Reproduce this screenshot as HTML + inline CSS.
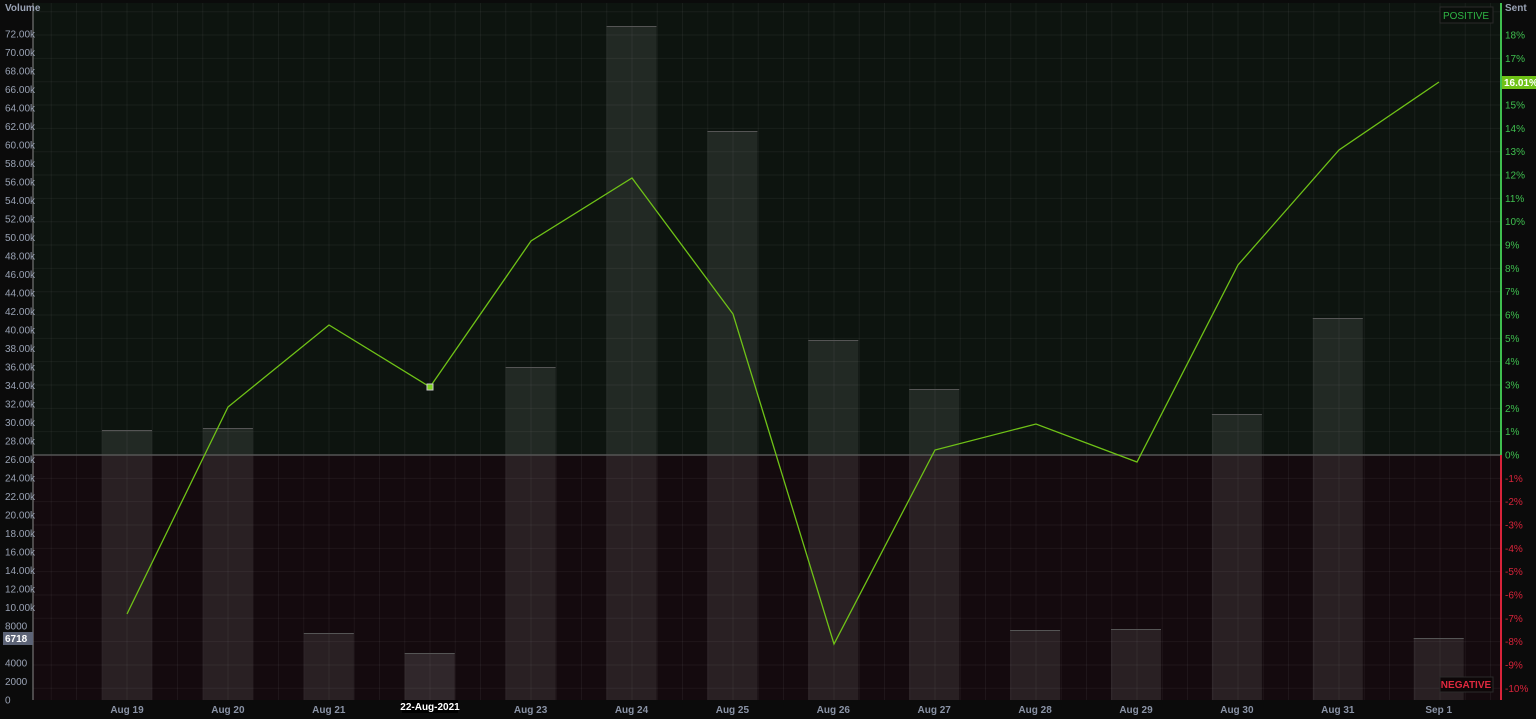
<!DOCTYPE html>
<html><head><meta charset="utf-8"><style>
html,body{margin:0;padding:0;background:#0a0a0a;width:1536px;height:719px;overflow:hidden}
svg{display:block}
text{font-family:"Liberation Sans",sans-serif;font-size:10px}
</style></head><body>
<svg id="s" width="1536" height="719" xmlns="http://www.w3.org/2000/svg"></svg>
<script>
const s=document.getElementById('s');let h='';
const X0=33,X1=1500,Y0=3,Y1=700,Z=455;
h+=`<rect x="0" y="0" width="1536" height="719" fill="#0b0b0b"/>`;
h+=`<rect x="${X0}" y="${Y0}" width="${X1-X0}" height="${Z-Y0}" fill="#0d140f"/>`;
h+=`<rect x="${X0}" y="${Z}" width="${X1-X0}" height="${Y1-Z}" fill="#140a0e"/>`;
for(let x=127-101*1.25;x<X1;x+=101/4){if(x>X0)h+=`<line x1="${x}" y1="${Y0}" x2="${x}" y2="${Y1}" stroke="#ffffff" stroke-opacity="0.05"/>`}
for(let y=Z;y>Y0;y-=23.33)h+=`<line x1="${X0}" y1="${y}" x2="${X1}" y2="${y}" stroke="#ffffff" stroke-opacity="0.05"/>`;
for(let y=Z+23.33;y<Y1;y+=23.33)h+=`<line x1="${X0}" y1="${y}" x2="${X1}" y2="${y}" stroke="#ffffff" stroke-opacity="0.05"/>`;
const tops=[430,428,633,653,367,26,131,340,389,630,629,414,318,638];
const days=['Aug 19','Aug 20','Aug 21','Aug 22','Aug 23','Aug 24','Aug 25','Aug 26','Aug 27','Aug 28','Aug 29','Aug 30','Aug 31','Sep 1'];
tops.forEach((t,i)=>{const cx=127+i*100.9;h+=`<rect x="${cx-25}" y="${t}" width="50" height="${Y1-t}" fill="#ffffff" fill-opacity="${i==3?0.12:0.09}"/><line x1="${cx-25}" y1="${t+0.5}" x2="${cx+25}" y2="${t+0.5}" stroke="#555" />`;
 if(i!=3)h+=`<text x="${cx}" y="713" fill="#8a93a6" text-anchor="middle" font-weight="bold" font-size="9">${days[i]}</text>`});
h+=`<line x1="${X0}" y1="${Z}" x2="${X1}" y2="${Z}" stroke="#555" stroke-width="1.5"/>`;
const pts=[[127,614],[228,407],[329,325],[430,387],[531,241],[632,178],[733,314],[834,644],[935,450],[1036,424],[1137,462],[1238,265],[1339,150],[1439,82]];
h+=`<polyline points="${pts.map(p=>p.join(',')).join(' ')}" fill="none" stroke="#6fc217" stroke-width="1.3"/>`;
h+=`<rect x="427" y="384" width="6" height="6" fill="#7ed321" stroke="#ccc" stroke-width="1"/>`;
h+=`<line x1="${X0}" y1="${Y0}" x2="${X0}" y2="${Y1}" stroke="#888"/>`;
h+=`<text x="5" y="11" fill="#9aa3b5" font-size="8" font-weight="bold">Volume</text>`;
for(let v=0;v<=72;v+=2){const y=700-(v/2)*18.5;if(v==6)continue;const lab=v<10?(v*1000+''):v.toFixed(0)+'.00k';h+=`<text x="5" y="${y+3.5}" fill="#9aa3b5" font-size="9">${v==0?'0':lab}</text>`}
h+=`<rect x="3" y="632" width="30" height="13" fill="#5d6477"/><text x="5" y="642" fill="#fff" font-size="9" font-weight="bold">6718</text>`;
h+=`<line x1="1501" y1="${Y0}" x2="1501" y2="${Z}" stroke="#3fbf4f" stroke-width="2"/><line x1="1501" y1="${Z}" x2="1501" y2="${Y1}" stroke="#d9233a" stroke-width="2"/>`;
h+=`<text x="1505" y="11" fill="#9aa3b5" font-size="8" font-weight="bold">Sent</text>`;
for(let p=-10;p<=18;p++){if(p==16)continue;const y=Z-p*23.33;h+=`<text x="1505" y="${y+3.5}" fill="${p>=0?'#3fbf4f':'#d9233a'}" font-size="9">${p}%</text>`}
h+=`<rect x="1502" y="76" width="34" height="13" fill="#6fc217"/><text x="1504" y="86" fill="#fff" font-size="9" font-weight="bold">16.01%</text>`;
h+=`<rect x="1440" y="7" width="53" height="16" fill="#0a0f0b" stroke="#2a2a2a"/><text x="1466" y="19" fill="#2fb545" font-size="9" text-anchor="middle">POSITIVE</text>`;
h+=`<rect x="1440" y="677" width="53" height="15" fill="#0d0708" stroke="#2a2a2a"/><text x="1466" y="688" fill="#e0293f" font-size="9" text-anchor="middle" font-weight="bold">NEGATIVE</text>`;
h+=`<rect x="402" y="700" width="56" height="13" fill="#000"/><text x="430" y="710" fill="#fff" font-size="9" font-weight="bold" text-anchor="middle">22-Aug-2021</text>`;
s.innerHTML=h;
</script>
</body></html>
